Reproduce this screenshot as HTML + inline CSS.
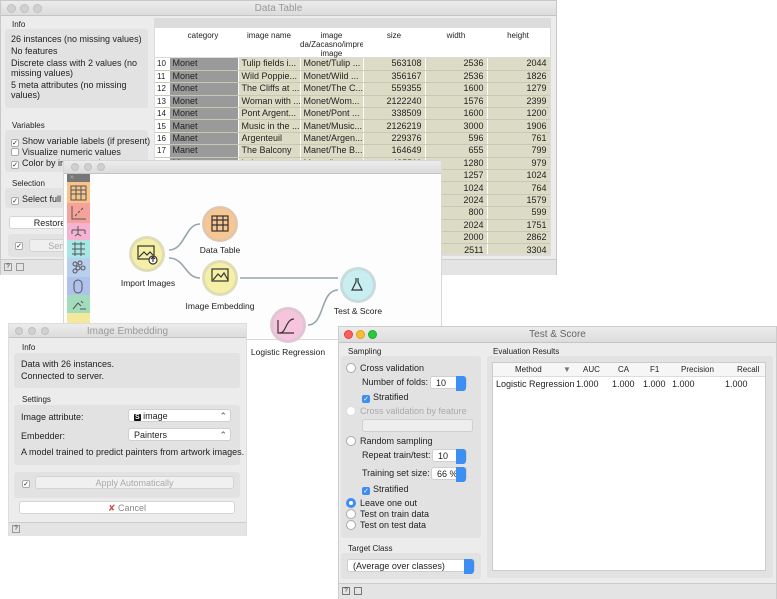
<!DOCTYPE html>
<html><head><meta charset="utf-8"><style>
*{box-sizing:border-box;margin:0;padding:0}
body{width:777px;height:599px;position:relative;overflow:hidden;background:#fff;font-family:"Liberation Sans",sans-serif;font-size:9px;color:#222}
.a{position:absolute}
.win{position:absolute;background:#ececec;border:1px solid #c8c8c8}
.tb{position:absolute;left:0;right:0;top:0;height:15px;background:linear-gradient(#ececec,#dcdcdc);border-bottom:1px solid #c4c4c4;text-align:center;color:#999;font-size:10px;line-height:15px}
.dot{position:absolute;top:3px;width:9px;height:9px;border-radius:50%;background:#d0d0d0;border:1px solid #c0c0c0}
.box{position:absolute;background:#e2e2e2;border-radius:3px}
.h{position:absolute;font-size:8px;color:#222}
.cb{display:inline-block;width:8px;height:8px;background:#fff;border:1px solid #aaa;border-radius:2px;vertical-align:-1px;margin-right:3px;font-size:7px;line-height:7px;text-align:center}
.cbb{background:#3d8ef3;border-color:#3d8ef3;color:#fff}
.rd{display:inline-block;width:10px;height:10px;background:#fff;border:1px solid #aaa;border-radius:50%;vertical-align:-2px;margin-right:4px}
table{border-collapse:collapse}
tr{height:12.4px}
td{height:12.4px;line-height:11px;font-size:9px;padding:0 3px;white-space:nowrap;overflow:hidden;border-bottom:1px solid #c8c8b4;border-right:1px solid #fff}
.btn{position:absolute;background:#fff;border:1px solid #d4d4d4;border-radius:3px;text-align:center}
.sp{position:absolute;background:#fff;border:1px solid #cfcfcf;border-radius:3px;font-size:9px;padding-left:5px;line-height:13px}
.sp i{position:absolute;right:0;top:-1px;width:10px;height:15px;background:#3d8ef3;border-radius:0 3px 3px 0}
.node{position:absolute;width:36px;height:36px;border-radius:50%;border:3px solid rgba(200,200,200,.5)}
.lbl{position:absolute;font-size:8.5px;color:#222;white-space:nowrap;transform:translateX(-50%)}
</style></head><body>

<!-- Data Table window -->
<div class="win" style="left:0;top:0;width:557px;height:275px">
 <div class="tb">Data Table</div>
 <div class="dot" style="left:6px"></div><div class="dot" style="left:19px"></div><div class="dot" style="left:32px"></div>
 <div class="h" style="left:11px;top:19px">Info</div>
 <div class="box" style="left:4px;top:28px;width:143px;height:79px"></div>
 <div class="a" style="left:10px;top:33px;font-size:9px;line-height:10px;width:135px">26 instances (no missing values)<br><div style="height:2px"></div>No features<br><div style="height:2px"></div>Discrete class with 2 values (no missing values)<div style="height:2px"></div>5 meta attributes (no missing values)</div>
 <div class="h" style="left:11px;top:120px">Variables</div>
 <div class="box" style="left:4px;top:129px;width:143px;height:42px"></div>
 <div class="a" style="left:10px;top:135px;line-height:11px;font-size:9px"><span class="cb">✓</span>Show variable labels (if present)<br><span class="cb"></span>Visualize numeric values<br><span class="cb">✓</span>Color by instance classes</div>
 <div class="h" style="left:11px;top:178px">Selection</div>
 <div class="box" style="left:4px;top:187px;width:143px;height:20px"></div>
 <div class="a" style="left:10px;top:193px"><span class="cb">✓</span>Select full rows</div>
 <div class="btn" style="left:8px;top:215px;width:140px;height:13px;line-height:12px">Restore Original Order</div>
 <div class="box" style="left:7px;top:233px;width:143px;height:23px"></div>
 <div class="a" style="left:14px;top:238px"><span class="cb">✓</span></div>
 <div class="btn" style="left:28px;top:238px;width:115px;height:13px;line-height:12px;color:#aaa;background:#efefef">Send Automatically</div>
 <div class="a" style="left:0;top:258px;width:555px;height:16px;background:#e4e4e4;border-top:1px solid #ccc"></div>
 <div class="a" style="left:3px;top:262px;width:8px;height:8px;border:1px solid #999;font-size:6px;line-height:6px;text-align:center">?</div>
 <div class="a" style="left:15px;top:262px;width:8px;height:8px;border:1px solid #999"></div>
 <div class="a" style="left:153px;top:17px;width:397px;height:238px;background:#dcdcdc"></div>
 <div class="a" style="left:154px;top:27px;width:395px;height:29px;background:#fff"></div>
 <div class="a" style="left:154px;top:27px;font-size:8px;line-height:9px;text-align:center">
  <div class="a" style="left:14px;top:3px;width:68px">category</div>
  <div class="a" style="left:83px;top:3px;width:62px">image name</div>
  <div class="a" style="left:145px;top:3px;width:63px;overflow:hidden;white-space:nowrap">image<br>da/Zacasno/impre<br>image</div>
  <div class="a" style="left:208px;top:3px;width:62px">size</div>
  <div class="a" style="left:270px;top:3px;width:62px">width</div>
  <div class="a" style="left:332px;top:3px;width:62px">height</div>
 </div>
 <div class="a" style="left:154px;top:57px;width:395px;height:196px;overflow:hidden">
 <table style="width:395px;table-layout:fixed">
 <colgroup><col style="width:14px"><col style="width:69px"><col style="width:62px"><col style="width:63px"><col style="width:62px"><col style="width:62px"><col style="width:63px"></colgroup>
 <tbody id="tb"></tbody></table></div>
</div>

<!-- Canvas window -->
<div class="win" style="left:63px;top:160px;width:379px;height:180px;background:#fdfdfd;border-color:#d8d8d8">
 <div class="tb" style="height:13px"></div>
 <div class="dot" style="left:7px;top:2px;width:8px;height:8px"></div><div class="dot" style="left:20px;top:2px;width:8px;height:8px"></div><div class="dot" style="left:33px;top:2px;width:8px;height:8px"></div>
</div>
<div class="a" style="left:67px;top:174px;width:23px;height:8px;background:#777;color:#bbb;font-size:7px;line-height:8px;padding-left:3px">»</div>
<div class="a" style="left:67px;top:182px;width:23px;height:21px;background:#f8c48a"></div>
<div class="a" style="left:67px;top:203px;width:23px;height:20px;background:#f4a29a"></div>
<div class="a" style="left:67px;top:223px;width:23px;height:17px;background:#f5b2d2"></div>
<div class="a" style="left:67px;top:240px;width:23px;height:18px;background:#a8e6e6"></div>
<div class="a" style="left:67px;top:258px;width:23px;height:19px;background:#b8d0ee"></div>
<div class="a" style="left:67px;top:277px;width:23px;height:18px;background:#b0c2ec"></div>
<div class="a" style="left:67px;top:295px;width:23px;height:18px;background:#a2dcbc"></div>
<div class="a" style="left:67px;top:313px;width:23px;height:10px;background:#f4e99a"></div>
<svg class="a" style="left:0;top:0" width="777" height="599">
 <g fill="none" stroke="#555" stroke-width="1">
  <rect x="71" y="186" width="15" height="14"/><path d="M71 190h15M71 194h15M76 186v14M81 186v14"/>
  <path d="M72 206v13h14M75 216l2-2M78 213l2-2M81 210l2-2"/>
  <path d="M78 226v4M72 230h13M72 230v4M78 230v4M85 230v4M75 236l3-2 3 2"/>
  <path d="M72 244h13M72 249h13M72 254h13M75 242v14M81 242v14"/>
  <circle cx="75" cy="264" r="2"/><circle cx="80" cy="263" r="2"/><circle cx="78" cy="268" r="2"/><circle cx="83" cy="268" r="2"/><circle cx="75" cy="271" r="2"/>
  <rect x="74" y="280" width="8" height="13" rx="4"/>
  <path d="M73 309l5-6 3 3M81 301l2 2M80 309h6"/>
 </g>
 <g fill="none" stroke="#97a5ad" stroke-width="1.6">
  <path d="M169 250 C185 250,185 224,200 224"/>
  <path d="M169 258 C185 258,185 278,200 278"/>
  <path d="M240 278 L338 278"/>
  <path d="M308 325 C325 325,320 290,338 290"/>
 </g>
</svg>
<div class="node" style="left:129px;top:236px;background:#f6f0a6"></div>
<div class="node" style="left:202px;top:206px;background:#f8c690"></div>
<div class="node" style="left:202px;top:260px;background:#f6f0a6"></div>
<div class="node" style="left:340px;top:267px;background:#c8eef2"></div>
<div class="node" style="left:270px;top:307px;background:#f6c4dc"></div>
<svg class="a" style="left:0;top:0" width="777" height="599"><g fill="none" stroke="#333" stroke-width="1.2">
 <rect x="138" y="246" width="16" height="13"/><path d="M139 257l5-5 3 3 3-3 3 3"/><circle cx="153" cy="260" r="4" fill="#fff"/><path d="M153 262v-4M151 259l2-2 2 2"/>
 <rect x="212" y="216" width="16" height="15"/><path d="M212 220h16M212 225h16M217 216v15M223 216v15"/>
 <rect x="212" y="269" width="16" height="12"/><path d="M213 280l5-6 3 3 3-4 4 7"/>
 <path d="M280 333c6 0 6-14 14-14"/><path d="M278 320v13h16"/>
 <path d="M356 278v4l-4 8h10l-4-8v-4"/>
</g></svg>
<div class="lbl" style="left:148px;top:278px">Import Images</div>
<div class="lbl" style="left:220px;top:245px">Data Table</div>
<div class="lbl" style="left:220px;top:301px">Image Embedding</div>
<div class="lbl" style="left:358px;top:306px">Test &amp; Score</div>
<div class="lbl" style="left:288px;top:347px">Logistic Regression</div>

<!-- Image Embedding -->
<div class="win" style="left:8px;top:323px;width:239px;height:213px;border-color:#ddd">
 <div class="tb" style="height:14px">Image Embedding</div>
 <div class="dot" style="left:6px;top:3px;width:8px;height:8px"></div><div class="dot" style="left:19px;top:3px;width:8px;height:8px"></div><div class="dot" style="left:32px;top:3px;width:8px;height:8px"></div>
 <div class="h" style="left:13px;top:19px">Info</div>
 <div class="box" style="left:5px;top:29px;width:226px;height:35px"></div>
 <div class="a" style="left:12px;top:34px;line-height:12px">Data with 26 instances.<br>Connected to server.</div>
 <div class="h" style="left:13px;top:71px">Settings</div>
 <div class="box" style="left:5px;top:81px;width:226px;height:60px"></div>
 <div class="a" style="left:12px;top:88px">Image attribute:</div>
 <div class="sp" style="left:119px;top:85px;width:103px;height:13px"><b style="background:#111;color:#fff;font-size:7px;padding:0 1px;border-radius:1px">S</b> image<span style="position:absolute;right:3px;color:#555">⌃</span></div>
 <div class="a" style="left:12px;top:107px">Embedder:</div>
 <div class="sp" style="left:119px;top:104px;width:103px;height:13px">Painters<span style="position:absolute;right:3px;color:#555">⌃</span></div>
 <div class="a" style="left:12px;top:123px">A model trained to predict painters from artwork images.</div>
 <div class="box" style="left:5px;top:148px;width:226px;height:26px"></div>
 <div class="a" style="left:13px;top:153px"><span class="cb">✓</span></div>
 <div class="btn" style="left:26px;top:152px;width:199px;height:13px;line-height:12px;color:#aaa;background:#f0f0f0">Apply Automatically</div>
 <div class="btn" style="left:10px;top:177px;width:216px;height:13px;line-height:12px;color:#888"><span style="color:#c55">✘</span> Cancel</div>
 <div class="a" style="left:0;top:198px;width:237px;height:14px;background:#e4e4e4;border-top:1px solid #ccc"></div>
 <div class="a" style="left:3px;top:201px;width:8px;height:8px;border:1px solid #999;font-size:6px;line-height:6px;text-align:center">?</div>
</div>

<!-- Test & Score -->
<div class="win" style="left:338px;top:326px;width:439px;height:273px;border-color:#ccc">
 <div class="tb" style="height:16px;color:#666">Test &amp; Score</div>
 <div class="dot" style="left:5px;top:3px;background:#fc5f57;border-color:#e0443e"></div>
 <div class="dot" style="left:17px;top:3px;background:#fdbc2e;border-color:#dea123"></div>
 <div class="dot" style="left:29px;top:3px;background:#29c840;border-color:#1aab29"></div>
 <div class="h" style="left:9px;top:20px">Sampling</div>
 <div class="box" style="left:2px;top:29px;width:140px;height:182px"></div>
 <div class="a" style="left:7px;top:36px"><span class="rd"></span>Cross validation</div>
 <div class="a" style="left:23px;top:50px">Number of folds:</div>
 <div class="sp" style="left:91px;top:49px;width:37px;height:13px">10<i></i></div>
 <div class="a" style="left:23px;top:65px"><span class="cb cbb">✓</span>Stratified</div>
 <div class="a" style="left:7px;top:79px;color:#aaa"><span class="rd" style="border-color:#ddd"></span>Cross validation by feature</div>
 <div class="sp" style="left:23px;top:92px;width:111px;height:13px;background:#eee"></div>
 <div class="a" style="left:7px;top:109px"><span class="rd"></span>Random sampling</div>
 <div class="a" style="left:23px;top:123px">Repeat train/test:</div>
 <div class="sp" style="left:93px;top:122px;width:35px;height:13px">10<i></i></div>
 <div class="a" style="left:23px;top:141px">Training set size:</div>
 <div class="sp" style="left:92px;top:140px;width:36px;height:13px">66 %<i></i></div>
 <div class="a" style="left:23px;top:157px"><span class="cb cbb">✓</span>Stratified</div>
 <div class="a" style="left:7px;top:171px"><span class="rd" style="border:3px solid #3d8ef3"></span>Leave one out</div>
 <div class="a" style="left:7px;top:182px"><span class="rd"></span>Test on train data</div>
 <div class="a" style="left:7px;top:193px"><span class="rd"></span>Test on test data</div>
 <div class="h" style="left:9px;top:217px">Target Class</div>
 <div class="box" style="left:2px;top:226px;width:140px;height:26px"></div>
 <div class="sp" style="left:8px;top:232px;width:128px;height:13px">(Average over classes)<i></i></div>
 <div class="h" style="left:154px;top:20px">Evaluation Results</div>
 <div class="box" style="left:148px;top:29px;width:286px;height:222px"></div>
 <div class="a" style="left:153px;top:35px;width:274px;height:209px;background:#fff;border:1px solid #ccc"></div>
 <div class="a" style="left:154px;top:36px;width:272px;height:14px;background:#f6f6f6;border-bottom:1px solid #ddd;font-size:8px;line-height:13px">
  <span class="a" style="left:22px">Method</span><span class="a" style="left:70px;color:#777">▼</span>
  <span class="a" style="left:90px">AUC</span><span class="a" style="left:125px">CA</span><span class="a" style="left:157px">F1</span><span class="a" style="left:188px">Precision</span><span class="a" style="left:244px">Recall</span>
 </div>
 <div class="a" style="left:157px;top:52px;white-space:nowrap">Logistic Regression</div>
 <div class="a" style="left:237px;top:52px">1.000</div><div class="a" style="left:273px;top:52px">1.000</div><div class="a" style="left:304px;top:52px">1.000</div><div class="a" style="left:333px;top:52px">1.000</div><div class="a" style="left:386px;top:52px">1.000</div>
 <div class="a" style="left:0;top:256px;width:437px;height:16px;background:#e4e4e4;border-top:1px solid #ccc"></div>
 <div class="a" style="left:3px;top:260px;width:8px;height:8px;border:1px solid #777;font-size:6px;line-height:6px;text-align:center">?</div>
 <div class="a" style="left:15px;top:260px;width:8px;height:8px;border:1px solid #777"></div>
</div>

<script>
var d=[[10,"Monet","Tulip fields i...","Monet/Tulip ...",563108,2536,2044],[11,"Monet","Wild Poppie...","Monet/Wild ...",356167,2536,1826],[12,"Monet","The Cliffs at ...","Monet/The C...",559355,1600,1279],[13,"Monet","Woman with ...","Monet/Wom...",2122240,1576,2399],[14,"Monet","Pont Argent...","Monet/Pont ...",338509,1600,1200],[15,"Manet","Music in the ...","Manet/Music...",2126219,3000,1906],[16,"Manet","Argenteuil","Manet/Argen...",229376,596,761],[17,"Manet","The Balcony","Manet/The B...",164649,655,799],[18,"Manet","Lola","Manet/L...",485511,1280,979],[19,"","","","",1257,1024],[20,"","","","",1024,764],[21,"","","","",2024,1579],[22,"","","","",800,599],[23,"","","","",2024,1751],[24,"","","","",2000,2862],[25,"","","","",2511,3304]];
var h="";d.forEach(function(r){h+='<tr><td style="background:#fff;font-size:8px;padding:0 2px">'+r[0]+'</td><td style="background:#9a9a9a">'+r[1]+'</td><td style="background:#dcdcc6">'+r[2]+'</td><td style="background:#dcdcc6">'+r[3]+'</td><td style="background:#dcdcc6;text-align:right">'+r[4]+'</td><td style="background:#dcdcc6;text-align:right">'+r[5]+'</td><td style="background:#dcdcc6;text-align:right">'+r[6]+'</td></tr>'});
document.getElementById("tb").innerHTML=h;
</script>
</body></html>
